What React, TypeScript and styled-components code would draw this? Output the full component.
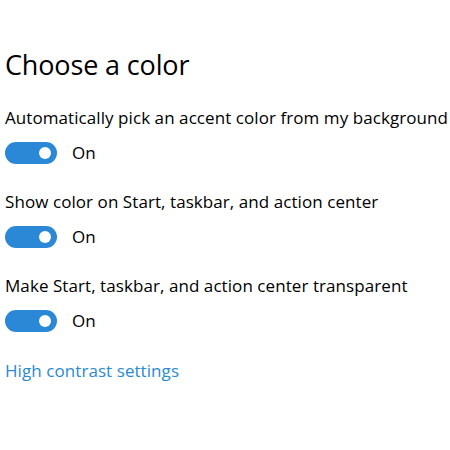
import React from "react";
import styled, { createGlobalStyle } from "styled-components";

const Global = createGlobalStyle`
  html, body { margin: 0; padding: 0; background: #ffffff; }
  body { font-family: "Open Sans", "Noto Sans", sans-serif; color: #000; }
`;

const Page = styled.div`
  width: 450px;
  height: 450px;
  box-sizing: border-box;
  padding: 45px 0 0 5px;
  display: flex;
  flex-direction: column;
  overflow: hidden;
`;

const Heading = styled.h1`
  margin: 0;
  font-size: 27px;
  font-weight: 400;
  line-height: 40px;
  letter-spacing: -0.15px;
`;

const Group = styled.div<{ $first?: boolean }>`
  display: flex;
  flex-direction: column;
  margin-top: ${(p) => (p.$first ? "20px" : "25px")};
`;

const Label = styled.div`
  font-size: 17px;
  line-height: 26px;
  white-space: nowrap;
  letter-spacing: 0.07px;
`;

const ToggleRow = styled.div`
  display: flex;
  align-items: center;
  gap: 15px;
  margin-top: 11px;
`;

const Track = styled.div`
  width: 52px;
  height: 22px;
  border-radius: 11px;
  background: #2a88d6;
  display: flex;
  align-items: center;
  justify-content: flex-end;
  padding-right: 6px;
  box-sizing: border-box;
`;

const Knob = styled.div`
  width: 12px;
  height: 12px;
  border-radius: 50%;
  background: #fff;
`;

const State = styled.span`
  font-size: 17px;
  line-height: 22px;
`;

const Link = styled.a`
  margin-top: 26px;
  font-size: 17px;
  line-height: 26px;
  color: #2b8ad0;
  text-decoration: none;
  letter-spacing: 0.07px;
`;

const items = [
  "Automatically pick an accent color from my background",
  "Show color on Start, taskbar, and action center",
  "Make Start, taskbar, and action center transparent",
];

export default function App() {
  return (
    <Page>
      <Global />
      <Heading>Choose a color</Heading>
      {items.map((t, i) => (
        <Group key={t} $first={i === 0}>
          <Label>{t}</Label>
          <ToggleRow>
            <Track>
              <Knob />
            </Track>
            <State>On</State>
          </ToggleRow>
        </Group>
      ))}
      <Link href="#">High contrast settings</Link>
    </Page>
  );
}
